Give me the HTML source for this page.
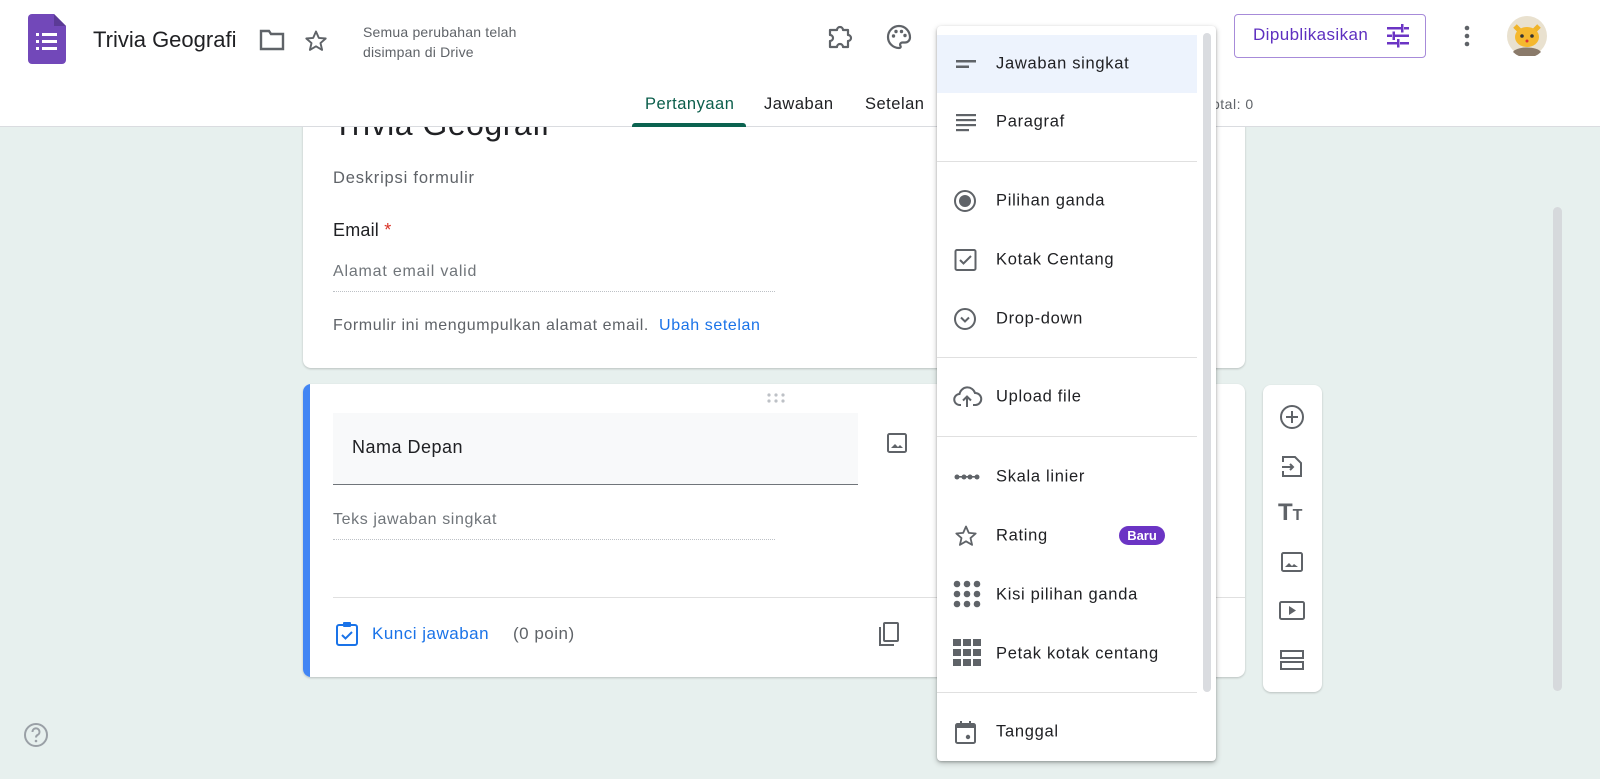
<!DOCTYPE html>
<html><head><meta charset="utf-8"><style>
*{box-sizing:border-box;margin:0;padding:0}
body{width:1600px;height:779px;overflow:hidden;background:#e7f0ee;font-family:"Liberation Sans",Roboto,sans-serif;position:relative;color:#202124;letter-spacing:.5px}
.abs{position:absolute}
header{position:absolute;left:0;top:0;width:1600px;height:127px;background:#fff;border-bottom:1px solid #dadce0;z-index:2}
.card{position:absolute;background:#fff;border-radius:8px;box-shadow:0 1px 2px rgba(0,0,0,.2)}
.menu{position:absolute;left:937px;top:26px;width:279px;height:735px;background:#fff;border-radius:4px;box-shadow:0 2px 6px rgba(0,0,0,.25),0 1px 2px rgba(0,0,0,.2);z-index:5;overflow:hidden}
.it{position:absolute;left:0;width:260px;height:58px;font-size:16.5px;color:#202124;letter-spacing:.7px}
.it span{position:absolute;left:59px;top:50%;transform:translateY(-50%)}
.it svg{position:absolute;left:16px;top:17px}
.dv{position:absolute;left:0;width:260px;height:1px;background:#e0e0e0}
</style></head><body>
<header>
<svg class="abs" style="left:28px;top:14px" width="38" height="50" viewBox="0 0 38 50"><path d="M4 0h22l12 12v34a4 4 0 0 1-4 4H4a4 4 0 0 1-4-4V4a4 4 0 0 1 4-4z" fill="#7248b9"/><path d="M26 0v12h12z" fill="#5b3a96"/><g fill="#fff"><rect x="8" y="19" width="3" height="3"/><rect x="14" y="19" width="15" height="3"/><rect x="8" y="26" width="3" height="3"/><rect x="14" y="26" width="15" height="3"/><rect x="8" y="33" width="3" height="3"/><rect x="14" y="33" width="15" height="3"/></g></svg>
<div class="abs" style="left:93px;top:27px;font-size:22px;letter-spacing:0">Trivia Geografi</div>
<svg class="abs" style="left:259px;top:29px" width="26" height="22" viewBox="0 0 26 22"><path d="M2 2h8l2 3h12v15H2z" fill="none" stroke="#5f6368" stroke-width="2.4"/></svg>
<svg class="abs" style="left:304px;top:29px" width="24" height="24" viewBox="0 0 24 24"><path d="M12 2.5l2.8 6.4 6.9.6-5.2 4.6 1.6 6.8L12 17.3l-6.1 3.6 1.6-6.8L2.3 9.5l6.9-.6z" fill="none" stroke="#5f6368" stroke-width="1.9" stroke-linejoin="round"/></svg>
<div class="abs" style="left:363px;top:22px;font-size:14px;color:#5f6368;line-height:20px;letter-spacing:.2px">Semua perubahan telah<br>disimpan di Drive</div>
<svg class="abs" style="left:826px;top:24px" width="28" height="26" viewBox="0 0 28 26"><path d="M6 6h5a3 3 0 0 1 6 0h5v5a3 3 0 0 1 0 6v6h-5a3 3 0 0 0-6 0H4v-6a3 3 0 0 0 0-6V6z" fill="none" stroke="#5f6368" stroke-width="2.2" stroke-linejoin="round"/></svg>
<svg class="abs" style="left:885px;top:23px" width="28" height="28" viewBox="0 0 28 28"><path d="M14 3a11 11 0 0 0 0 22c1.5 0 2-1 1.5-2-1-1.5 0-3.5 2-3.5H20a5 5 0 0 0 5-5C25 8 20 3 14 3z" fill="none" stroke="#5f6368" stroke-width="2.2"/><circle cx="8.5" cy="13" r="1.7" fill="#5f6368"/><circle cx="11" cy="8.5" r="1.7" fill="#5f6368"/><circle cx="16.5" cy="8.5" r="1.7" fill="#5f6368"/><circle cx="20" cy="12.5" r="1.7" fill="#5f6368"/></svg>
<div class="abs" style="left:1234px;top:14px;width:192px;height:44px;border:1px solid #a78bd9;border-radius:4px;color:#5e2fc0;font-size:17px;padding:10px 0 0 18px;letter-spacing:.4px">Dipublikasikan</div>
<svg class="abs" style="left:1385px;top:24px" width="26" height="24" viewBox="0 0 26 24" fill="#6b34c4"><rect x="2" y="3" width="14" height="2.5"/><rect x="19" y="3" width="5" height="2.5"/><rect x="16" y="0" width="2.5" height="8.5"/><rect x="2" y="10.5" width="5" height="2.5"/><rect x="10" y="10.5" width="14" height="2.5"/><rect x="7.5" y="7.5" width="2.5" height="8.5"/><rect x="2" y="18" width="10" height="2.5"/><rect x="15" y="18" width="9" height="2.5"/><rect x="12" y="15" width="2.5" height="8.5"/></svg>
<svg class="abs" style="left:1462px;top:24px" width="10" height="24"><circle cx="5" cy="4" r="2.3" fill="#5f6368"/><circle cx="5" cy="12" r="2.3" fill="#5f6368"/><circle cx="5" cy="20" r="2.3" fill="#5f6368"/></svg>
<svg class="abs" style="left:1507px;top:16px" width="40" height="40" viewBox="0 0 40 40"><circle cx="20" cy="20" r="20" fill="#e9e1cf"/><path d="M6 36c4-6 24-6 28 0a20 20 0 0 1-28 0z" fill="#8a7a6a"/><path d="M8 10l6 6M32 10l-6 6" stroke="#f0b429" stroke-width="5"/><ellipse cx="20" cy="21" rx="12" ry="10" fill="#f5b82e"/><circle cx="15" cy="20" r="1.8" fill="#333"/><circle cx="25" cy="20" r="1.8" fill="#333"/><circle cx="20" cy="25" r="1.5" fill="#d33"/></svg>
<div class="abs" style="left:645px;top:95px;font-size:16.5px;color:#0b5e4b">Pertanyaan</div>
<div class="abs" style="left:632px;top:123px;width:114px;height:4px;background:#0b6350;border-radius:3px 3px 0 0"></div>
<div class="abs" style="left:764px;top:95px;font-size:16.5px">Jawaban</div>
<div class="abs" style="left:865px;top:95px;font-size:16.5px">Setelan</div>
<div class="abs" style="left:1212px;top:96px;font-size:14px;color:#5f6368">otal: 0</div>
</header>

<div class="card" style="left:303px;top:100px;width:942px;height:268px;z-index:1">
<div class="abs" style="left:30px;top:6px;font-size:32px;color:#202124">Trivia Geografi</div>
<div class="abs" style="left:30px;top:69px;font-size:16.5px;color:#5f6368;letter-spacing:.8px">Deskripsi formulir</div>
<div class="abs" style="left:30px;top:120px;font-size:18px;letter-spacing:.2px">Email <span style="color:#d93025">*</span></div>
<div class="abs" style="left:30px;top:163px;font-size:16px;color:#70757a;letter-spacing:.8px">Alamat email valid</div>
<div class="abs" style="left:30px;top:191px;width:442px;border-top:1px dotted #bdc1c6"></div>
<div class="abs" style="left:30px;top:217px;font-size:16px;color:#5f6368;letter-spacing:.6px">Formulir ini mengumpulkan alamat email.&nbsp; <span style="color:#1a73e8">Ubah setelan</span></div>
</div>

<div class="card" style="left:303px;top:384px;width:942px;height:293px;overflow:hidden">
<div class="abs" style="left:0;top:0;width:7px;height:293px;background:#4285f4"></div>
<svg class="abs" style="left:463px;top:8px" width="20" height="12"><g fill="#bdc1c6"><circle cx="3" cy="3" r="1.6"/><circle cx="10" cy="3" r="1.6"/><circle cx="17" cy="3" r="1.6"/><circle cx="3" cy="9" r="1.6"/><circle cx="10" cy="9" r="1.6"/><circle cx="17" cy="9" r="1.6"/></g></svg>
<div class="abs" style="left:30px;top:29px;width:525px;height:72px;background:#f8f9fa;border-bottom:1px solid #70757a"></div>
<div class="abs" style="left:49px;top:53px;font-size:18px;letter-spacing:.5px">Nama Depan</div>
<svg class="abs" style="left:583px;top:48px" width="22" height="22" viewBox="0 0 22 22"><rect x="2" y="2" width="18" height="18" rx="1.5" fill="none" stroke="#5f6368" stroke-width="2"/><path d="M5 16l4-4 3 3 2-2 3 3z" fill="#5f6368"/></svg>
<div class="abs" style="left:30px;top:127px;font-size:16px;color:#70757a;letter-spacing:.6px">Teks jawaban singkat</div>
<div class="abs" style="left:30px;top:155px;width:442px;border-top:1px dotted #bdc1c6"></div>
<div class="abs" style="left:30px;top:213px;width:912px;height:1px;background:#e0e0e0"></div>
<svg class="abs" style="left:32px;top:237px" width="24" height="26" viewBox="0 0 24 26"><rect x="2" y="4" width="20" height="20" rx="2" fill="none" stroke="#1a73e8" stroke-width="2"/><rect x="8" y="1" width="8" height="5" rx="1" fill="#1a73e8"/><path d="M7 14l3.5 3.5L17 11" fill="none" stroke="#1a73e8" stroke-width="2"/></svg>
<div class="abs" style="left:69px;top:240px;font-size:17px;color:#1a73e8">Kunci jawaban</div>
<div class="abs" style="left:210px;top:240px;font-size:17px;color:#5f6368">(0 poin)</div>
<svg class="abs" style="left:574px;top:237px" width="24" height="26" viewBox="0 0 24 26"><rect x="7" y="2" width="14" height="18" rx="1" fill="none" stroke="#5f6368" stroke-width="2"/><path d="M3 6v18h14" fill="none" stroke="#5f6368" stroke-width="2"/></svg>
</div>

<div class="card" style="left:1263px;top:385px;width:59px;height:307px">
<svg class="abs" style="left:16px;top:19px" width="26" height="26" viewBox="0 0 26 26"><circle cx="13" cy="13" r="11" fill="none" stroke="#5f6368" stroke-width="2"/><path d="M13 7v12M7 13h12" stroke="#5f6368" stroke-width="2"/></svg>
<svg class="abs" style="left:16px;top:68px" width="26" height="26" viewBox="0 0 26 26"><path d="M4 9V4h12l6 6v13H4v-5" fill="none" stroke="#5f6368" stroke-width="2"/><path d="M3 14h11M11 11l3 3-3 3" fill="none" stroke="#5f6368" stroke-width="2"/></svg>
<div class="abs" style="left:15px;top:114px;font-size:24px;font-weight:bold;color:#5f6368;letter-spacing:0">T<span style="font-size:16px">T</span></div>
<svg class="abs" style="left:16px;top:165px" width="26" height="26" viewBox="0 0 26 26"><rect x="3" y="3" width="20" height="18" rx="1.5" fill="none" stroke="#5f6368" stroke-width="2"/><path d="M6 17l4-4 3 3 2-2 4 3z" fill="#5f6368"/></svg>
<svg class="abs" style="left:14px;top:213px" width="30" height="26" viewBox="0 0 30 26"><rect x="3" y="4" width="24" height="17" rx="1.5" fill="none" stroke="#5f6368" stroke-width="2"/><path d="M12 8v9l7-4.5z" fill="#5f6368"/></svg>
<svg class="abs" style="left:15px;top:263px" width="28" height="26" viewBox="0 0 28 26"><rect x="3" y="3" width="22" height="7" fill="none" stroke="#5f6368" stroke-width="2"/><rect x="3" y="14" width="22" height="7" fill="none" stroke="#5f6368" stroke-width="2"/></svg>
</div>

<div class="abs" style="left:1553px;top:207px;width:9px;height:484px;background:#d6d9dc;border-radius:5px"></div>
<svg class="abs" style="left:23px;top:722px" width="26" height="26" viewBox="0 0 26 26"><circle cx="13" cy="13" r="11" fill="none" stroke="#9aa0a6" stroke-width="2"/><path d="M9.5 10a3.5 3.5 0 1 1 5 3c-1 .6-1.5 1.2-1.5 2.5" fill="none" stroke="#9aa0a6" stroke-width="2"/><circle cx="13" cy="19" r="1.3" fill="#9aa0a6"/></svg>

<div class="menu">
<div class="abs" style="left:266px;top:7px;width:8px;height:659px;background:#dadce0;border-radius:4px"></div>
<div class="it" style="top:9px;background:#edf3fd"><svg width="26" height="24" viewBox="0 0 26 24"><rect x="3" y="8" width="20" height="2.5" fill="#5f6368"/><rect x="3" y="13.5" width="13" height="2.5" fill="#5f6368"/></svg><span>Jawaban singkat</span></div>
<div class="it" style="top:67px"><svg width="26" height="24" viewBox="0 0 26 24" fill="#5f6368"><rect x="3" y="4" width="20" height="2.2"/><rect x="3" y="9" width="20" height="2.2"/><rect x="3" y="14" width="20" height="2.2"/><rect x="3" y="19" width="13" height="2.2"/></svg><span>Paragraf</span></div>
<div class="dv" style="top:135px"></div>
<div class="it" style="top:146px"><svg width="26" height="24" viewBox="0 0 26 24"><circle cx="12" cy="12" r="10" fill="none" stroke="#5f6368" stroke-width="2"/><circle cx="12" cy="12" r="6" fill="#5f6368"/></svg><span>Pilihan ganda</span></div>
<div class="it" style="top:205px"><svg width="26" height="24" viewBox="0 0 26 24"><rect x="2.5" y="2" width="20" height="20" rx="1.5" fill="none" stroke="#5f6368" stroke-width="2"/><path d="M7 12l3.5 3.5L18 8" fill="none" stroke="#5f6368" stroke-width="2"/></svg><span>Kotak Centang</span></div>
<div class="it" style="top:264px"><svg width="26" height="24" viewBox="0 0 26 24"><circle cx="12" cy="12" r="10" fill="none" stroke="#5f6368" stroke-width="2"/><path d="M8 10.5l4 4 4-4" fill="none" stroke="#5f6368" stroke-width="2"/></svg><span>Drop-down</span></div>
<div class="dv" style="top:331px"></div>
<div class="it" style="top:342px"><svg width="30" height="24" viewBox="0 0 30 24"><path d="M8 20H7a5.5 5.5 0 0 1-.5-11A8 8 0 0 1 22 8a6 6 0 0 1 .5 12H20" fill="none" stroke="#5f6368" stroke-width="2"/><path d="M14 22V12M10 15.5l4-4 4 4" fill="none" stroke="#5f6368" stroke-width="2"/></svg><span>Upload file</span></div>
<div class="dv" style="top:410px"></div>
<div class="it" style="top:422px"><svg width="28" height="24" viewBox="0 0 28 24" fill="#5f6368"><rect x="2" y="11" width="24" height="1.6"/><circle cx="4" cy="12" r="2.5"/><circle cx="11" cy="12" r="2.5"/><circle cx="17" cy="12" r="2.5"/><circle cx="24" cy="12" r="2.5"/></svg><span>Skala linier</span></div>
<div class="it" style="top:481px"><svg width="26" height="24" viewBox="0 0 24 24"><path d="M12 2.5l2.8 6.4 6.9.6-5.2 4.6 1.6 6.8L12 17.3l-6.1 3.6 1.6-6.8L2.3 9.5l6.9-.6z" fill="none" stroke="#5f6368" stroke-width="1.8" stroke-linejoin="round"/></svg><span>Rating</span><div class="abs" style="left:182px;top:19px;width:46px;height:19px;border-radius:10px;background:#6b34c4;color:#fff;font-size:13px;font-weight:bold;text-align:center;line-height:19px;letter-spacing:0">Baru</div></div>
<div class="it" style="top:540px"><svg style="top:14px" width="28" height="28" viewBox="0 0 28 28" fill="#5f6368"><circle cx="4" cy="4" r="3.3"/><circle cx="14" cy="4" r="3.3"/><circle cx="24" cy="4" r="3.3"/><circle cx="4" cy="14" r="3.3"/><circle cx="14" cy="14" r="3.3"/><circle cx="24" cy="14" r="3.3"/><circle cx="4" cy="24" r="3.3"/><circle cx="14" cy="24" r="3.3"/><circle cx="24" cy="24" r="3.3"/></svg><span>Kisi pilihan ganda</span></div>
<div class="it" style="top:599px"><svg style="top:14px" width="28" height="28" viewBox="0 0 28 28" fill="#5f6368"><rect x="0" y="0" width="8" height="7"/><rect x="10" y="0" width="8" height="7"/><rect x="20" y="0" width="8" height="7"/><rect x="0" y="10" width="8" height="7"/><rect x="10" y="10" width="8" height="7"/><rect x="20" y="10" width="8" height="7"/><rect x="0" y="20" width="8" height="7"/><rect x="10" y="20" width="8" height="7"/><rect x="20" y="20" width="8" height="7"/></svg><span>Petak kotak centang</span></div>
<div class="dv" style="top:666px"></div>
<div class="it" style="top:677px"><svg width="26" height="26" viewBox="0 0 26 26"><rect x="3" y="4" width="19" height="19" rx="1.5" fill="none" stroke="#5f6368" stroke-width="2"/><rect x="3" y="4" width="19" height="4" fill="#5f6368"/><path d="M8 1v5M17 1v5" stroke="#5f6368" stroke-width="2"/><circle cx="15" cy="17" r="2.2" fill="#5f6368"/></svg><span>Tanggal</span></div>
</div>
</body></html>
